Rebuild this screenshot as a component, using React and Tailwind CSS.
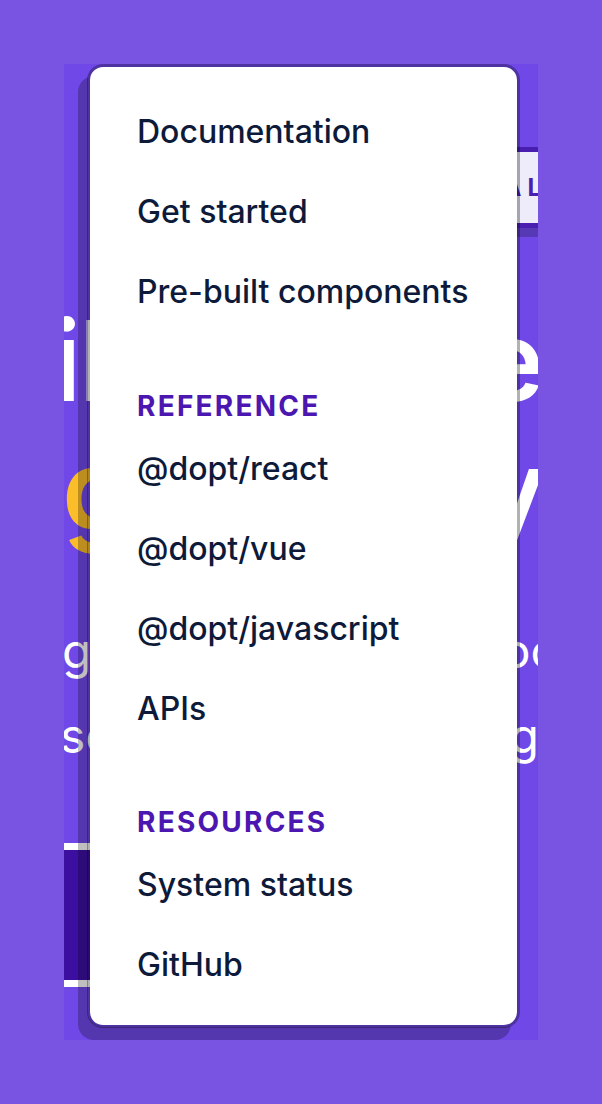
import React from "react";

const sections = [
  {
    title: null,
    links: ["Documentation", "Get started", "Pre-built components"],
  },
  {
    title: "Reference",
    links: ["@dopt/react", "@dopt/vue", "@dopt/javascript", "APIs"],
  },
  {
    title: "Resources",
    links: ["System status", "GitHub"],
  },
];

const MenuLink = ({ label }) => (
  <a href="#" className="flex h-[80px] items-center text-[32px] font-medium leading-none text-[#0d1a3a]">
    {label}
  </a>
);

const DocsMenu = () => (
  <nav className="absolute left-[23px] top-0 z-10 h-[964px] w-[433px] rounded-[16px] border-[3px] border-black/30 bg-white bg-clip-padding pl-[47px] pt-[25px] shadow-[-9px_12px_0_rgba(0,0,0,0.25)]">
    {sections.map((section, i) => (
      <div key={i} className={i === 0 ? "" : i === 1 ? "mt-[51px]" : "mt-[50px]"}>
        {section.title && (
          <p className="flex h-[46px] items-center text-[28px] font-bold uppercase leading-none tracking-[0.08em] text-[#4c17b1]">
            {section.title}
          </p>
        )}
        {section.links.map((label) => (
          <MenuLink key={label} label={label} />
        ))}
      </div>
    ))}
  </nav>
);

export default function App() {
  return (
    <div className="min-h-[1104px] w-full bg-[#7953e1] p-[64px] font-['Inter',sans-serif]">
      <div className="relative h-[976px] w-[474px] overflow-hidden bg-[#7048e8]">
        {/* hero behind the open menu */}
        <div className="flex flex-col pt-[83px]">
          <div className="flex justify-end">
            <span className="-mr-[34px] flex h-[81px] items-center rounded-[4px] border-[5px] border-[#4a1fb0] bg-[#eeecfb] pl-[20px] pr-[20px] text-[24px] font-bold uppercase tracking-[0.25em] text-[#4a1fb0] shadow-[-6px_9px_0_rgba(0,0,0,0.22)]">
              New: visual
            </span>
          </div>

          <h1 className="mt-[68px] text-[112px] font-semibold leading-[129px] tracking-[-0.02em] text-white">
            <span className="flex justify-between whitespace-nowrap">
              <span className="-ml-[12px]">il</span>
              <span className="-mr-[4px]">e</span>
            </span>
            <span className="flex justify-between whitespace-nowrap">
              <span className="-ml-[2px] text-[#fbbd2a]">gu</span>
              <span className="-mr-[6px]">y</span>
            </span>
          </h1>

          <div className="mt-[54px] text-[48px] leading-[85px] text-white">
            <p className="flex justify-between whitespace-nowrap">
              <span className="-ml-[2px]">g</span>
              <span className="-mr-[20px]">oc</span>
            </p>
            <p className="flex justify-between whitespace-nowrap">
              <span className="-ml-[4px]">se</span>
              <span className="-mr-[1px]">g</span>
            </p>
          </div>

          <button className="-ml-[20px] mt-[65px] flex h-[144px] w-[300px] items-center justify-center border-[7px] border-white bg-[#3d0fa0] text-[32px] font-semibold text-white">
            Get started
          </button>
        </div>

        <DocsMenu />
      </div>
    </div>
  );
}
